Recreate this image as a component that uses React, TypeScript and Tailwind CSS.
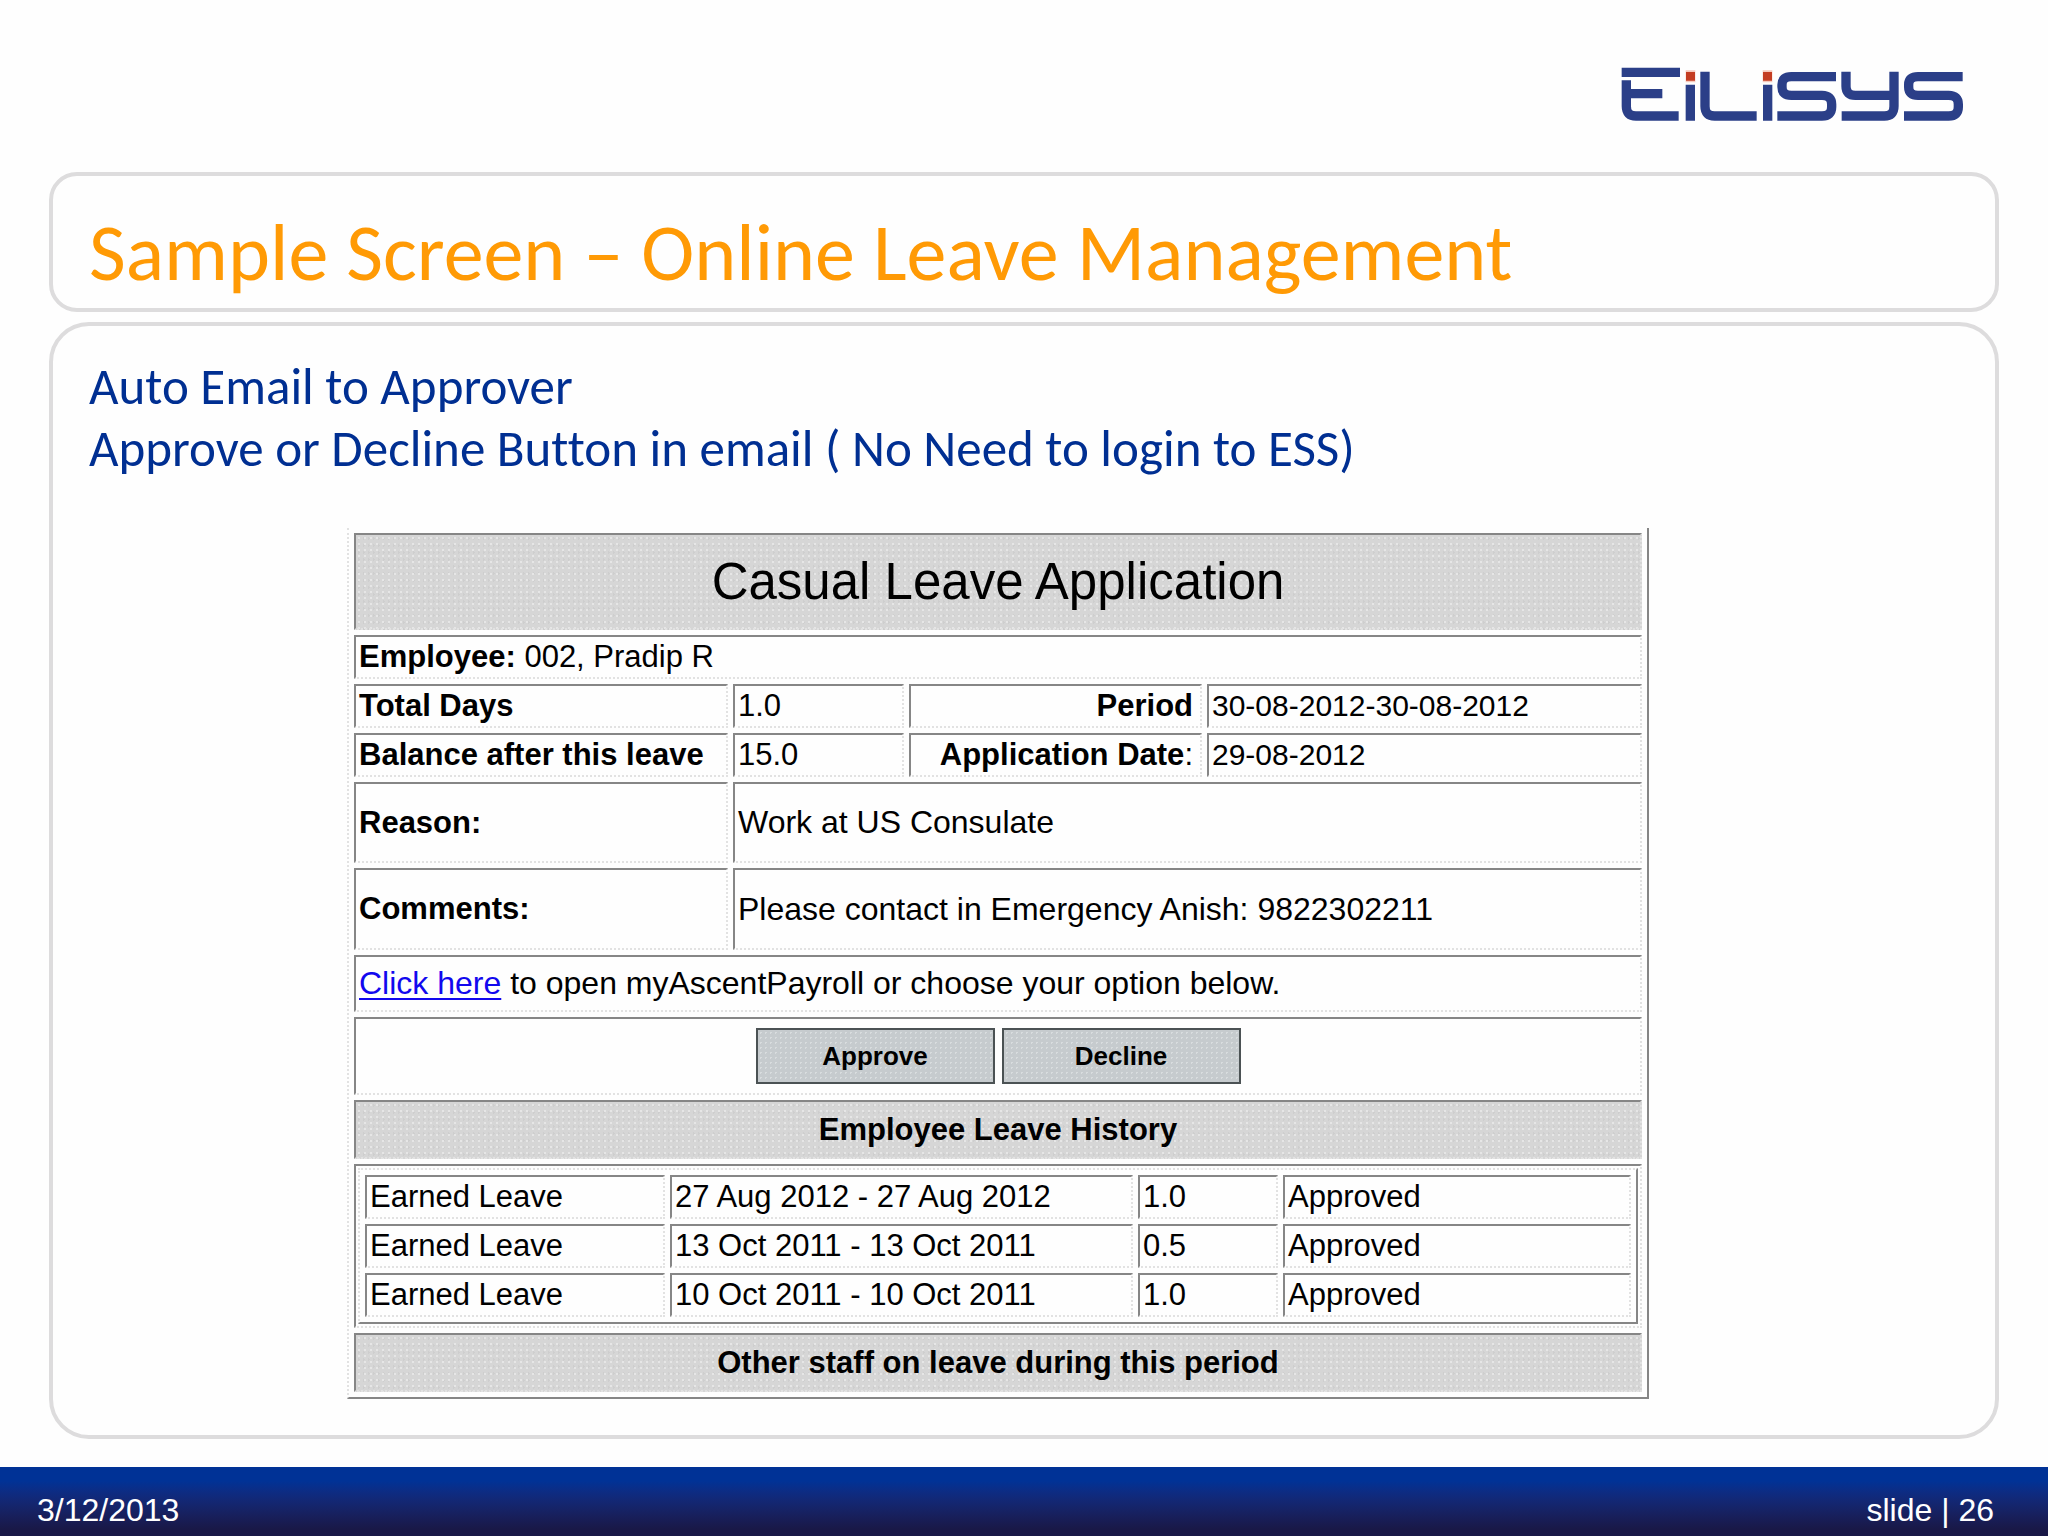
import React from "react";

const cell =
  "border-2 border-t-[#868686] border-l-[#868686] border-r-[#e2e2e2] border-b-[#e2e2e2] [border-right-style:dotted] [border-bottom-style:dotted] px-[3px] text-left font-normal";
const dither =
  "bg-[#d6d6d6] bg-[image:radial-gradient(#e6e6e6_1px,transparent_1px),radial-gradient(#cecece_1px,transparent_1px)] bg-[size:6px_6px,5px_7px]";

const history = [
  { type: "Earned Leave", dates: "27 Aug 2012 - 27 Aug 2012", days: "1.0", status: "Approved" },
  { type: "Earned Leave", dates: "13 Oct 2011 - 13 Oct 2011", days: "0.5", status: "Approved" },
  { type: "Earned Leave", dates: "10 Oct 2011 - 10 Oct 2011", days: "1.0", status: "Approved" },
];

function Logo() {
  return (
    <svg
      role="img"
      aria-label="EiLiSYS"
      viewBox="63 50 1026 162"
      className="h-[54px] w-[342px]"
      fill="none"
      stroke="#2b3f88"
      strokeWidth="28"
    >
      <path d="M65 66H240" />
      <path d="M79 90V168Q79 197 108 197H236M79 130H187" />
      <path d="M271 103V211M503 103V211" />
      <path d="M315 64V168Q315 197 344 197H470" />
      <path d="M708 79H574Q546 79 546 103V110Q546 135 574 135H666Q695 135 695 162V170Q695 197 666 197H532" />
      <path d="M738 64V108Q738 135 766 135H882M882 64V168Q882 197 853 197H725" />
      <path d="M1088 79H954Q926 79 926 103V110Q926 135 954 135H1046Q1075 135 1075 162V170Q1075 197 1046 197H912" />
      <path d="M257 78H286M488 78H517" stroke="#f6c9bd" strokeWidth="36" />
      <path d="M258 78H285M489 78H516" stroke="#c43d22" strokeWidth="26" />
    </svg>
  );
}

function ActionButton({ children }: { children: React.ReactNode }) {
  return (
    <button
      type="button"
      className="h-[56px] w-[239px] border-2 border-[#4b5254] bg-[#c6cbce] bg-[image:radial-gradient(#d8dcde_1px,transparent_1px)] bg-[size:5px_5px] text-[26px] font-bold leading-none"
    >
      {children}
    </button>
  );
}

function HistoryTable() {
  return (
    <table
      aria-label="Employee Leave History"
      className="w-full table-fixed border-separate border-spacing-[5px] border-2 border-t-[#e2e2e2] border-l-[#e2e2e2] border-r-[#868686] border-b-[#868686] [border-left-style:dotted] [border-top-style:dotted]"
    >
      <colgroup>
        <col className="w-[300px]" />
        <col className="w-[463px]" />
        <col className="w-[140px]" />
        <col />
      </colgroup>
      <tbody>
        {history.map((row) => (
          <tr key={row.dates} className="h-[44px]">
            <td className={cell}>{row.type}</td>
            <td className={cell}>{row.dates}</td>
            <td className={cell}>{row.days}</td>
            <td className={cell}>{row.status}</td>
          </tr>
        ))}
      </tbody>
    </table>
  );
}

function LeaveApplication() {
  return (
    <table className="ml-[294px] w-[1302px] max-w-full table-fixed border-separate border-spacing-[5px] border-2 border-t-0 border-l-[#e2e2e2] border-r-[#868686] border-b-[#868686] [border-left-style:dotted] font-['Liberation_Sans',Arial,sans-serif] text-[31px] leading-[36px] text-black">
      <colgroup>
        <col className="w-[374px]" />
        <col className="w-[171px]" />
        <col className="w-[293px]" />
        <col />
      </colgroup>
      <tbody>
        <tr className="h-[97px]">
          <th colSpan={4} className={`${cell} ${dither}`}>
            <h2 className="text-center text-[51px] leading-[56px]">Casual Leave Application</h2>
          </th>
        </tr>
        <tr className="h-[44px]">
          <td colSpan={4} className={cell}>
            <b>Employee:</b> 002, Pradip R
          </td>
        </tr>
        <tr className="h-[44px]">
          <th className={cell}><b>Total Days</b></th>
          <td className={cell}>1.0</td>
          <th className={cell}><b className="block pr-1 text-right">Period</b></th>
          <td className={cell}><span className="text-[30px]">30-08-2012-30-08-2012</span></td>
        </tr>
        <tr className="h-[44px]">
          <th className={cell}><b className="whitespace-nowrap">Balance after this leave</b></th>
          <td className={cell}>15.0</td>
          <th className={cell}>
            <span className="block pr-1 text-right"><b>Application Date</b>:</span>
          </th>
          <td className={cell}><span className="text-[30px]">29-08-2012</span></td>
        </tr>
        <tr className="h-[81px]">
          <th className={cell}><b>Reason:</b></th>
          <td colSpan={3} className={cell}><span className="text-[32px]">Work at US Consulate</span></td>
        </tr>
        <tr className="h-[82px]">
          <th className={cell}><b>Comments:</b></th>
          <td colSpan={3} className={cell}><span className="text-[32px]">Please contact in Emergency Anish: 9822302211</span></td>
        </tr>
        <tr className="h-[57px]">
          <td colSpan={4} className={cell}>
            <span className="text-[32px]">
              <a href="#payroll" className="text-[#1208ee] underline decoration-2 underline-offset-4">Click here</a> to open
              myAscentPayroll or choose your option below.
            </span>
          </td>
        </tr>
        <tr className="h-[78px]">
          <td colSpan={4} className={cell}>
            <div className="flex justify-center gap-[7px]">
              <ActionButton>Approve</ActionButton>
              <ActionButton>Decline</ActionButton>
            </div>
          </td>
        </tr>
        <tr className="h-[59px]">
          <th colSpan={4} className={`${cell} ${dither}`}>
            <b className="block text-center">Employee Leave History</b>
          </th>
        </tr>
        <tr>
          <td colSpan={4} className="border-2 border-t-[#868686] border-l-[#868686] border-r-[#e2e2e2] border-b-[#e2e2e2] [border-right-style:dotted] [border-bottom-style:dotted] p-[2px]">
            <HistoryTable />
          </td>
        </tr>
        <tr className="h-[59px]">
          <th colSpan={4} className={`${cell} ${dither}`}>
            <b className="block text-center">Other staff on leave during this period</b>
          </th>
        </tr>
      </tbody>
    </table>
  );
}

export default function App() {
  return (
    <div className="flex min-h-screen flex-col bg-[#fefefe] font-['Carlito','Lato',sans-serif] [font-variant-ligatures:none]">
      <header className="flex h-[172px] justify-end pt-[67px] pr-[85px]">
        <Logo />
      </header>
      <main className="mx-[49px] mb-7 flex flex-1 flex-col gap-[10px]">
        <div className="h-[140px] rounded-[28px] border-4 border-[#dddcdd] px-9 pt-[35px]">
          <h1 className="text-[80px] leading-[84px] text-[#ff9a05]">Sample Screen – Online Leave Management</h1>
        </div>
        <section className="flex-1 rounded-[40px] border-4 border-[#dddcdd] pt-[30px]">
          <div className="mb-12 px-9 text-[51px] leading-[62px] text-[#002f92]">
            <p>Auto Email to Approver</p>
            <p>Approve or Decline Button in email ( No Need to login to ESS)</p>
          </div>
          <LeaveApplication />
        </section>
      </main>
      <footer className="flex h-[69px] items-end justify-between bg-linear-to-b from-[#003296] from-20% to-[#191847] to-90% pr-[54px] pb-2 pl-[37px] font-['Liberation_Sans',Arial,sans-serif] text-[32px] leading-[36px] text-white">
        <span>3/12/2013</span>
        <span>slide | 26</span>
      </footer>
    </div>
  );
}
